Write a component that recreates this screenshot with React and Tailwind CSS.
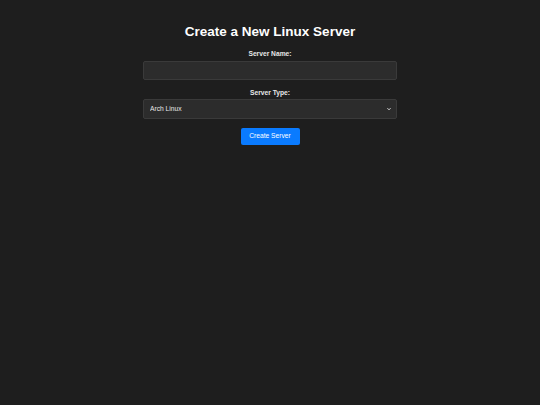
import React from "react";

export default function App() {
  return (
    <div
      className="min-h-[405px] w-full bg-[#1e1e1e] text-[#f0f0f0] flex flex-col items-center pt-[24px]"
      style={{ fontFamily: '"Liberation Sans", Arial, sans-serif' }}
    >
      <h1 className="text-[13.5px] leading-[16px] font-bold text-white">Create a New Linux Server</h1>
      <form className="w-[254px] flex flex-col items-center mt-[9.5px]" onSubmit={(e) => e.preventDefault()}>
        <label className="block text-[6.7px] leading-[8px] font-bold text-[#e8e8e8] mb-[3px]">Server Name:</label>
        <input
          type="text"
          className="block w-full h-[19px] bg-[#2c2c2c] border border-[#3a3a3a] rounded-[2px] outline-none text-[6.7px] text-white px-[6px]"
        />
        <label className="block text-[6.7px] leading-[8px] font-bold text-[#e8e8e8] mt-[9.5px] mb-[2px]">Server Type:</label>
        <div className="relative w-full">
          <select className="block appearance-none w-full h-[19.5px] bg-[#2c2c2c] border border-[#3a3a3a] rounded-[2px] outline-none text-[6.7px] leading-[8px] text-[#e8e8e8] pl-[6px]">
            <option>Arch Linux</option>
          </select>
          <svg
            className="absolute right-[6px] top-[8px] pointer-events-none"
            width="4"
            height="4"
            viewBox="0 0 8 8"
            fill="none"
            stroke="#e8e8e8"
            strokeWidth="2"
          >
            <path d="M1 2.5 L4 5.5 L7 2.5" />
          </svg>
        </div>
        <button
          type="submit"
          className="block mt-[9px] h-[17.5px] w-[59px] bg-[#0a7bff] rounded-[2px] text-[6.7px] text-white"
        >
          Create Server
        </button>
      </form>
    </div>
  );
}
